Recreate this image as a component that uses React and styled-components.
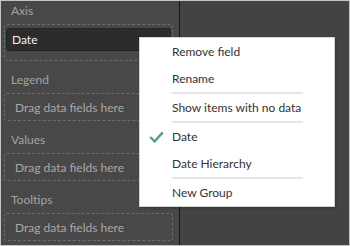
import styled, { createGlobalStyle } from "styled-components";

const GlobalStyle = createGlobalStyle`
    body{
        margin: 0;
        font-family: Lato, "Open Sans", sans-serif;
    }
    *{
        box-sizing: border-box;
    }
`

const menuItems = [
    { label: "Remove field" },
    { label: "Rename", separator: true },
    { label: "Show items with no data", separator: true },
    { label: "Date", checked: true },
    { label: "Date Hierarchy", separator: true },
    { label: "New Group" },
]

const wells = ["Legend", "Values", "Tooltips"]

function Check(){
    return(
        <svg width="15" height="12" viewBox="0 0 15 12">
            <polyline points="1.2,6 5.6,10.4 13.8,1.4" fill="none" stroke="#5b9c86" strokeWidth="2.4"/>
        </svg>
    )
}

function Chevron(){
    return(
        <svg width="8" height="5" viewBox="0 0 8 5">
            <polyline points="0.5,0.5 4,4 7.5,0.5" fill="none" stroke="#8a8a8a" strokeWidth="1"/>
        </svg>
    )
}

export default function App(){
    return(
        <Frame>
            <GlobalStyle/>
            <FieldsPane>
                <SectionLabel>Axis</SectionLabel>
                <Well filled>
                    <Field>
                        <span>Date</span>
                        <Chevron/>
                    </Field>
                </Well>
                {wells.map(name =>
                    <div key={name}>
                        <SectionLabel spaced>{name}</SectionLabel>
                        <Well>Drag data fields here</Well>
                    </div>
                )}
            </FieldsPane>
            <Divider/>
            <Canvas/>
            <Menu>
                {menuItems.map(item =>
                    <div key={item.label}>
                        <MenuItem>
                            <CheckSlot>{item.checked && <Check/>}</CheckSlot>
                            {item.label}
                        </MenuItem>
                        {item.separator && <Separator/>}
                    </div>
                )}
            </Menu>
        </Frame>
    )
}

const Frame = styled.div`
    position: relative;
    width: 350px;
    height: 246px;
    border: 1px solid #c4c4c4;
    display: flex;
    background-color: #444444;
    overflow: hidden;
`
const FieldsPane = styled.div`
    width: 178px;
    flex-shrink: 0;
    background-color: #484848;
    padding: 0 6px 0 3px;
    display: flex;
    flex-direction: column;
`
const Divider = styled.div`
    width: 1px;
    background-color: #161616;
`
const Canvas = styled.div`
    flex: 1;
    background-color: #434343;
`
const SectionLabel = styled.div`
    height: 20px;
    line-height: 20px;
    padding-left: 7px;
    margin-top: ${props => props.spaced ? "9px" : "0"};
    margin-bottom: 3px;
    font-size: 12px;
    color: #a3a3a3;
`
const Well = styled.div`
    border: 1px dashed #6c6c6c;
    border-radius: 3px;
    height: ${props => props.filled ? "37px" : "28px"};
    padding: ${props => props.filled ? "3px 1px 9px 1px" : "0 0 0 10px"};
    display: flex;
    align-items: center;
    font-size: 12px;
    color: #a9a9a9;
`
const Field = styled.div`
    width: 100%;
    height: 23px;
    background-color: #2c2c2c;
    border: 1px solid #232323;
    border-radius: 3px;
    padding: 0 8px 0 5px;
    display: flex;
    align-items: center;
    justify-content: space-between;
    font-size: 12px;
    color: #f4f4f4;
`
const Menu = styled.div`
    position: absolute;
    left: 138px;
    top: 36px;
    width: 196px;
    background-color: #ffffff;
    border: 1px solid #d4d4d4;
    box-shadow: 1px 1px 3px rgba(0,0,0,0.25);
`
const MenuItem = styled.div`
    height: 27px;
    display: flex;
    align-items: center;
    font-size: 12px;
    color: #333333;
`
const CheckSlot = styled.div`
    width: 32px;
    display: flex;
    justify-content: center;
    padding-left: 1px;
`
const Separator = styled.div`
    height: 2px;
    margin: 0 31px 0 32px;
    background-color: #e6e6e6;
`
